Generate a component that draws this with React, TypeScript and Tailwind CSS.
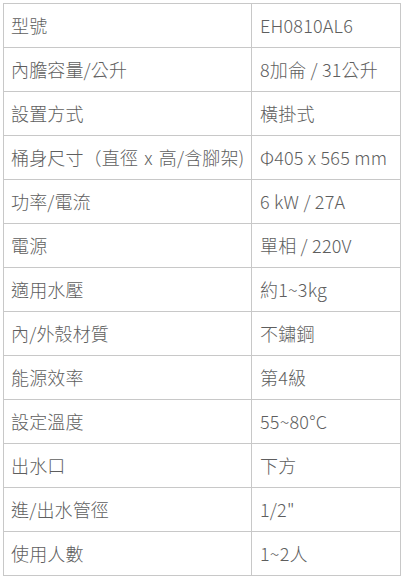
const specs: [string, string][] = [
  ["型號", "EH0810AL6"],
  ["內膽容量/公升", "8加侖 / 31公升"],
  ["設置方式", "橫掛式"],
  ["桶身尺寸（直徑 x 高/含腳架)", "Φ405 x 565 mm"],
  ["功率/電流", "6 kW / 27A"],
  ["電源", "單相 / 220V"],
  ["適用水壓", "約1~3kg"],
  ["內/外殼材質", "不鏽鋼"],
  ["能源效率", "第4級"],
  ["設定溫度", "55~80°C"],
  ["出水口", "下方"],
  ["進/出水管徑", "1/2\""],
  ["使用人數", "1~2人"],
];

export default function App() {
  return (
    <div className="bg-white min-h-[583px] pt-[3px] pl-[3px] font-['Noto_Sans_CJK_TC',sans-serif] font-light text-[18px] text-[#5e5e5e]">
      <div className="w-[398px] border-t border-l border-[#c8c8c8]">
        {specs.map(([label, value]) => (
          <div key={label} className="flex h-[44px]">
            <div className="w-[248px] border-r border-b border-[#c8c8c8] pl-[7px] flex items-center whitespace-nowrap [word-spacing:2px] tracking-[0.15px]">
              {label}
            </div>
            <div className="w-[149px] border-r border-b border-[#c8c8c8] pl-[8px] flex items-center whitespace-nowrap tracking-[0.2px]">
              {value}
            </div>
          </div>
        ))}
      </div>
    </div>
  );
}
